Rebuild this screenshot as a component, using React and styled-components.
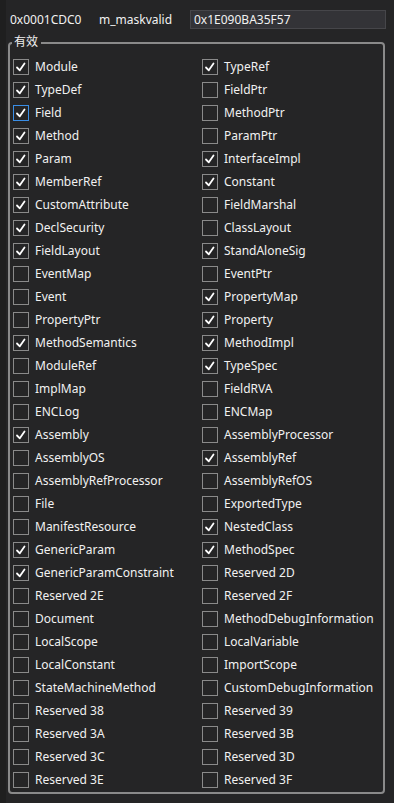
import React from "react";
import styled, { createGlobalStyle } from "styled-components";

const GlobalStyle = createGlobalStyle`
  html, body {
    margin: 0;
    padding: 0;
    background: #252526;
  }
  body {
    font-family: "Noto Sans", "Noto Sans CJK SC", sans-serif;
    font-size: 12px;
    color: #f1f1f1;
  }
`;

const TABLES = [
  "Module", "TypeRef", "TypeDef", "FieldPtr", "Field", "MethodPtr", "Method", "ParamPtr",
  "Param", "InterfaceImpl", "MemberRef", "Constant", "CustomAttribute", "FieldMarshal",
  "DeclSecurity", "ClassLayout", "FieldLayout", "StandAloneSig", "EventMap", "EventPtr",
  "Event", "PropertyMap", "PropertyPtr", "Property", "MethodSemantics", "MethodImpl",
  "ModuleRef", "TypeSpec", "ImplMap", "FieldRVA", "ENCLog", "ENCMap", "Assembly",
  "AssemblyProcessor", "AssemblyOS", "AssemblyRef", "AssemblyRefProcessor", "AssemblyRefOS",
  "File", "ExportedType", "ManifestResource", "NestedClass", "GenericParam", "MethodSpec",
  "GenericParamConstraint", "Reserved 2D", "Reserved 2E", "Reserved 2F", "Document",
  "MethodDebugInformation", "LocalScope", "LocalVariable", "LocalConstant", "ImportScope",
  "StateMachineMethod", "CustomDebugInformation", "Reserved 38", "Reserved 39",
  "Reserved 3A", "Reserved 3B", "Reserved 3C", "Reserved 3D", "Reserved 3E", "Reserved 3F",
];

const MASK = 0x1e090ba35f57n;

const Page = styled.div`
  min-height: 803px;
  box-sizing: border-box;
  padding-top: 10px;
  border-left: 6px solid #1f1f1f;
`;

const Header = styled.div`
  display: flex;
  align-items: center;
  height: 19px;
  padding-left: 4px;
`;

const Offset = styled.span`
  width: 89px;
`;

const FieldName = styled.span`
  width: 91px;
`;

const ValueBox = styled.div`
  box-sizing: border-box;
  width: 196px;
  height: 19px;
  background: #333337;
  border: 1px solid #46464a;
  padding-left: 3px;
  line-height: 17px;
`;

const Group = styled.div`
  position: relative;
  box-sizing: border-box;
  margin: 13px 0 0 2px;
  width: 377px;
  height: 752px;
  border: 2px solid #8a8a8a;
  border-radius: 4px;
  padding: 11px 0 0 3px;
`;

const GroupLabel = styled.span`
  position: absolute;
  top: -10px;
  left: 2px;
  padding: 0 3px 0 2px;
  background: #252526;
  line-height: 16px;
`;

const Grid = styled.div`
  display: grid;
  grid-template-columns: 189px 1fr;
  grid-auto-rows: 23px;
`;

const Item = styled.div`
  display: flex;
  align-items: center;
  gap: 6px;
  white-space: nowrap;
`;

const Box = styled.span`
  box-sizing: border-box;
  width: 16px;
  height: 16px;
  border: 1px solid ${(p) => (p.$focused ? "#3a8ee6" : "#8a8a8a")};
  display: flex;
  align-items: center;
  justify-content: center;
  flex: none;
`;

const Check = () => (
  <svg width="14" height="14" viewBox="0 0 14 14">
    <polyline
      points="3,7.5 5.8,10.3 10.5,3.5"
      fill="none"
      stroke="#ffffff"
      strokeWidth="1.8"
      strokeLinecap="round"
      strokeLinejoin="round"
    />
  </svg>
);

export default function App() {
  return (
    <>
      <GlobalStyle />
      <Page>
        <Header>
          <Offset>0x0001CDC0</Offset>
          <FieldName>m_maskvalid</FieldName>
          <ValueBox>0x1E090BA35F57</ValueBox>
        </Header>
        <Group>
          <GroupLabel>有效</GroupLabel>
          <Grid>
            {TABLES.map((name, i) => {
              const on = ((MASK >> BigInt(i)) & 1n) === 1n;
              return (
                <Item key={name}>
                  <Box $focused={name === "Field"}>{on && <Check />}</Box>
                  <span>{name}</span>
                </Item>
              );
            })}
          </Grid>
        </Group>
      </Page>
    </>
  );
}
